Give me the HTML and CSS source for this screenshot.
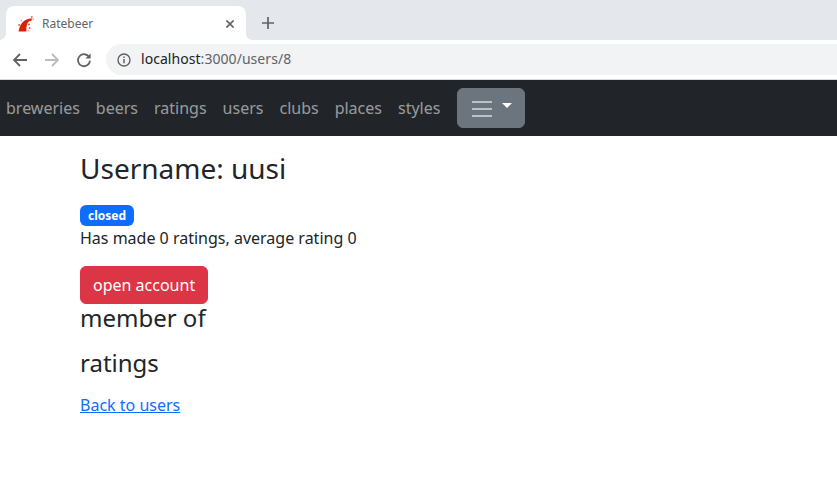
FILE: index.html
```html
<!DOCTYPE html>
<html lang="en">
<head>
<meta charset="utf-8">
<title>Ratebeer</title>
<link rel="stylesheet" href="styles.css">
</head>
<body>
<header class="chrome">
  <div class="tabstrip">
    <div class="tab">
      <svg class="favicon" viewBox="0 0 16 16" width="16" height="16"><path fill="#dd1f0a" d="M.6 15.6C1.2 11 3.4 6.4 7 4.2 9.2 2.9 11.6 2.4 14.2 2.4L13.4 4.8C11 5 9.8 6.2 9 8.6 8.4 10.8 8.3 13 8.5 15.6Z"/><circle cx="13.8" cy=".9" r=".9" fill="#e85a48"/><circle cx="15.2" cy="3.2" r=".8" fill="#ef8a7c"/><circle cx="1.2" cy="9" r="1" fill="#e85a48"/><circle cx="3.5" cy="4.5" r=".8" fill="#ef8a7c"/><circle cx="11" cy="8.6" r="1" fill="#e85a48"/><circle cx="11.6" cy="12" r="1" fill="#e85a48"/><circle cx="10.6" cy="14.8" r=".8" fill="#ef8a7c"/></svg>
      <span class="tab-title">Ratebeer</span>
      <svg class="tab-close" viewBox="0 0 8 8" width="8" height="8"><path d="M.4.4l7.2 7.2M7.6.4L.4 7.6" stroke="#5f6368" stroke-width="1.6" fill="none"/></svg>
    </div>
    <svg class="newtab" viewBox="0 0 12 12" width="12" height="12"><path d="M6 0v12M0 6h12" stroke="#5f6368" stroke-width="1.7" fill="none"/></svg>
  </div>
  <div class="toolbar">
    <svg class="tool" viewBox="0 0 16 16" width="16" height="16"><path d="M15 8H2.5M8 2L2 8l6 6" stroke="#5f6368" stroke-width="1.8" fill="none"/></svg>
    <svg class="tool" viewBox="0 0 16 16" width="16" height="16"><path d="M1 8h12.5M8 2l6 6-6 6" stroke="#babcbe" stroke-width="1.8" fill="none"/></svg>
    <svg class="tool" viewBox="0 0 16 16" width="16" height="16"><path d="M13.2 5.2A6 6 0 1 0 14 8.6" stroke="#5f6368" stroke-width="1.8" fill="none"/><path d="M14.6 1.4v5.2H9.4Z" fill="#5f6368"/></svg>
    <div class="omnibox">
      <svg class="info" viewBox="0 0 14 14" width="14" height="14"><circle cx="7" cy="7" r="6" stroke="#5f6368" stroke-width="1.4" fill="none"/><path d="M7 6v4.2M7 3.4v1.5" stroke="#5f6368" stroke-width="1.5" fill="none"/></svg>
      <span class="url"><span class="host">localhost</span>:3000/users/8</span>
    </div>
  </div>
</header>
<nav class="navbar">
  <a class="nav-link" href="#">breweries</a>
  <a class="nav-link" href="#">beers</a>
  <a class="nav-link" href="#">ratings</a>
  <a class="nav-link" href="#">users</a>
  <a class="nav-link" href="#">clubs</a>
  <a class="nav-link" href="#">places</a>
  <a class="nav-link" href="#">styles</a>
  <button class="menu-btn" type="button">
    <span class="burger"><i></i><i></i><i></i></span>
    <span class="caret"></span>
  </button>
</nav>
<main class="content">
  <h2 class="username">Username: uusi</h2>
  <span class="badge">closed</span>
  <p class="summary">Has made 0 ratings, average rating 0</p>
  <button class="danger" type="button">open account</button>
  <h4 class="section">member of</h4>
  <h4 class="section">ratings</h4>
  <a class="back" href="#">Back to users</a>
</main>
</body>
</html>
```
FILE: styles.css
```css
* { box-sizing: border-box; }
html, body { margin: 0; padding: 0; }
body {
  font-family: "Noto Sans", sans-serif;
  font-size: 16px;
  line-height: 24px;
  color: #212529;
  background: #fff;
}
.chrome { height: 80px; display: flex; flex-direction: column; }
.tabstrip {
  height: 40px;
  background: #e4e7eb;
  display: flex;
  align-items: flex-end;
  padding-left: 6px;
}
.tab {
  position: relative;
  width: 240px;
  height: 34px;
  background: #fff;
  border-radius: 8px 8px 0 0;
  display: flex;
  align-items: center;
  padding: 1px 12px 0 12px;
}
.tab::before,
.tab::after {
  content: "";
  position: absolute;
  bottom: 0;
  width: 6px;
  height: 6px;
}
.tab::before {
  left: -6px;
  background: radial-gradient(circle at 0 0, #e4e7eb 5.5px, #fff 6px);
}
.tab::after {
  right: -6px;
  background: radial-gradient(circle at 100% 0, #e4e7eb 5.5px, #fff 6px);
}
.favicon { flex: none; }
.tab-title {
  margin-left: 8px;
  flex: 1;
  font-size: 12px;
  line-height: 16px;
  color: #5f6368;
}
.tab-close { flex: none; }
.newtab { margin: 0 0 11px 16px; }
.toolbar {
  height: 40px;
  background: #fff;
  display: flex;
  align-items: center;
  padding-left: 12px;
  gap: 16px;
  border-bottom: 1px solid #d9d9d9;
}
.tool { flex: none; }
.omnibox {
  flex: 1;
  height: 31px;
  margin-left: -2px;
  background: #f1f3f4;
  border-radius: 15.5px 0 0 15.5px;
  display: flex;
  align-items: center;
  padding-left: 11px;
}
.info { flex: none; }
.url {
  margin-left: 10px;
  padding-bottom: 2px;
  font-size: 14px;
  line-height: 20px;
  letter-spacing: .05px;
  color: #5f6368;
}
.host { color: #202124; }
.navbar {
  height: 56px;
  background: #212529;
  display: flex;
  align-items: center;
  padding-left: 6px;
  gap: 16px;
}
.nav-link { color: rgba(255,255,255,.55); text-decoration: none; }
.menu-btn {
  width: 68px;
  height: 40px;
  margin-left: 1px;
  background: #6c757d;
  border: 1px solid #6c757d;
  border-radius: 6px;
  padding: 1px 0 0 14px;
  display: flex;
  align-items: center;
}
.burger { width: 20px; display: flex; flex-direction: column; gap: 5px; }
.burger i { display: block; height: 2px; background: rgba(255,255,255,.55); }
.caret {
  margin: -6px 0 0 10px;
  width: 0;
  height: 0;
  border-top: 5px solid #fff;
  border-left: 5px solid transparent;
  border-right: 5px solid transparent;
}
.content { padding: 15px 80px 0; display: flex; flex-direction: column; align-items: flex-start; }
.username { margin: 0 0 20px; font-size: 28px; font-weight: 400; line-height: 34px; }
.badge {
  background: #0d6efd;
  color: #fff;
  font-size: 12px;
  font-weight: 700;
  line-height: 13px;
  padding: 4px 8px;
  border-radius: 6px;
  height: 21px;
}
.summary { margin: 0 0 16px; }
.danger {
  font: inherit;
  height: 38px;
  margin-bottom: -1px;
  padding: 0 12px;
  background: #dc3545;
  color: #fff;
  border: 1px solid #dc3545;
  border-radius: 6px;
}
.section { margin: 0 0 16px; font-size: 24px; font-weight: 400; line-height: 29px; }
.back { color: #0d6efd; }
```
